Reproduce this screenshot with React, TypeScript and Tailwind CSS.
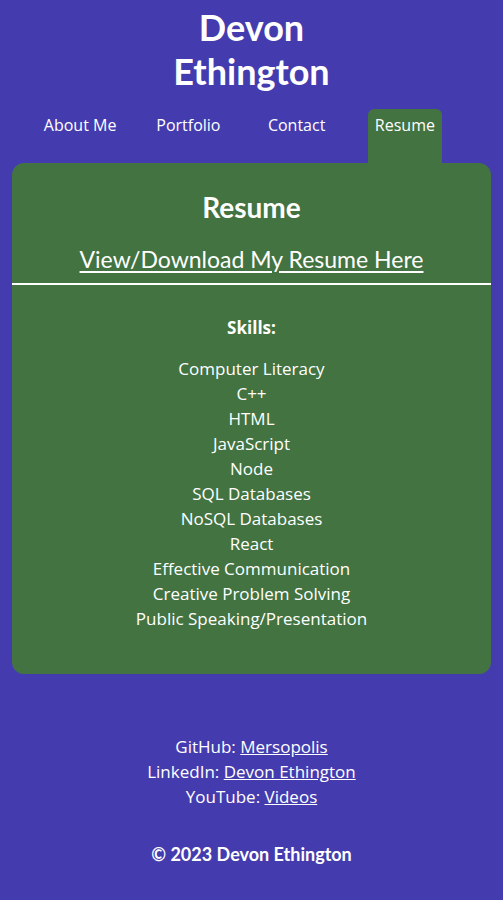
export default function App() {
  const skills = [
    "Computer Literacy",
    "C++",
    "HTML",
    "JavaScript",
    "Node",
    "SQL Databases",
    "NoSQL Databases",
    "React",
    "Effective Communication",
    "Creative Problem Solving",
    "Public Speaking/Presentation",
  ];
  const body = { fontFamily: '"Open Sans", "Noto Sans", sans-serif' };
  const lato = { fontFamily: 'Lato, sans-serif' };
  return (
    <div className="min-h-[900px] w-full bg-[#443cae] text-white" style={body}>
      <header className="pt-[5px] text-center">
        <h1 className="text-[36px] font-bold leading-[44px]" style={lato}>
          Devon
          <br />
          Ethington
        </h1>
        <nav className="mt-[16px] ml-[26px] grid w-[433px] grid-cols-4 text-[16px]">
          <div className="flex justify-center"><a className="px-[7px] pt-[4px] pb-[26px]">About Me</a></div>
          <div className="flex justify-center"><a className="px-[7px] pt-[4px] pb-[26px]">Portfolio</a></div>
          <div className="flex justify-center"><a className="px-[7px] pt-[4px] pb-[26px]">Contact</a></div>
          <div className="flex justify-center"><a className="rounded-t-[6px] bg-[#427341] px-[7px] pt-[4px] pb-[26px]">Resume</a></div>
        </nav>
      </header>
      <main className="mx-[12px] rounded-[12px] bg-[#427341] pb-[43px]">
        <h2 className="pt-[27px] text-center text-[28px] font-bold leading-[34px]" style={lato}>Resume</h2>
        <div className="mt-[20px] text-center text-[23px] leading-[30px]" style={lato}>
          <a className="underline underline-offset-[3px]">View/Download My Resume Here</a>
        </div>
        <hr className="mt-[9px] border-t-2 border-white" />
        <h3 className="mt-[30px] text-center text-[17px] font-bold">Skills:</h3>
        <ul className="mt-[15px] text-center text-[17px] leading-[25px]">
          {skills.map((s) => (
            <li key={s}>{s}</li>
          ))}
        </ul>
      </main>
      <footer className="pt-[60px] text-center text-[17px]">
        <div className="leading-[25px]">
          <p>GitHub: <a className="underline">Mersopolis</a></p>
          <p>LinkedIn: <a className="underline">Devon Ethington</a></p>
          <p>YouTube: <a className="underline">Videos</a></p>
        </div>
        <p className="mt-[32px] text-[18px] font-bold" style={lato}>© 2023 Devon Ethington</p>
      </footer>
    </div>
  );
}
